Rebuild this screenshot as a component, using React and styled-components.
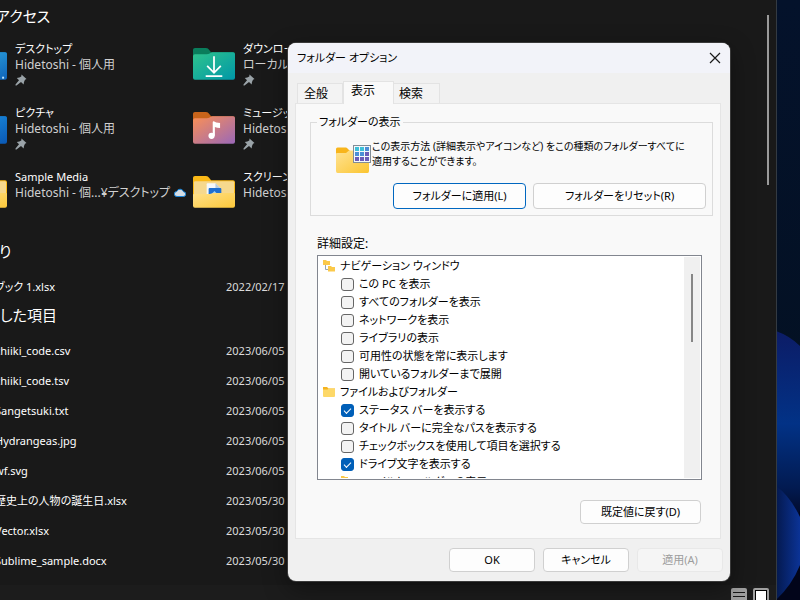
import { useState } from 'react';
import styled, { createGlobalStyle } from 'styled-components';


const places = [
    { title: 'デスクトップ', sub: 'Hidetoshi - 個人用', icon: 'desktop', pinned: true },
    { title: 'ダウンロード', sub: 'ローカルに保存済み', icon: 'download', pinned: true },
    { title: 'ピクチャ', sub: 'Hidetoshi - 個人用', icon: 'picture', pinned: true },
    { title: 'ミュージック', sub: 'Hidetoshi - 個人用', icon: 'music', pinned: true },
    { title: 'Sample Media', sub: 'Hidetoshi - 個...¥デスクトップ', icon: 'media' },
    { title: 'スクリーンショット', sub: 'Hidetoshi - 個人用', icon: 'shots', cloud: true },
];

const favorites = [{ name: 'ブック 1.xlsx', date: '2022/02/17' }];

const recents = [
    { name: 'chiiki_code.csv', date: '2023/06/05' },
    { name: 'chiiki_code.tsv', date: '2023/06/05' },
    { name: 'Sangetsuki.txt', date: '2023/06/05' },
    { name: 'Hydrangeas.jpg', date: '2023/06/05' },
    { name: 'wf.svg', date: '2023/06/05' },
    { name: '歴史上の人物の誕生日.xlsx', date: '2023/05/30' },
    { name: 'Vector.xlsx', date: '2023/05/30' },
    { name: 'Sublime_sample.docx', date: '2023/05/30' },
];

const options = [
    { group: 'ナビゲーション ウィンドウ', tree: true },
    { label: 'この PC を表示' },
    { label: 'すべてのフォルダーを表示' },
    { label: 'ネットワークを表示' },
    { label: 'ライブラリの表示' },
    { label: '可用性の状態を常に表示します' },
    { label: '開いているフォルダーまで展開' },
    { group: 'ファイルおよびフォルダー' },
    { label: 'ステータス バーを表示する', checked: true },
    { label: 'タイトル バーに完全なパスを表示する' },
    { label: 'チェックボックスを使用して項目を選択する' },
    { label: 'ドライブ文字を表示する', checked: true },
    { group: 'ファイルとフォルダーの表示', tree: true, nested: true },
];


export default function App() {
    return (
        <Desktop>
            <GlobalStyle />
            <Wallpaper />
            <Explorer />
            <FolderOptions />
        </Desktop>
    );
}


function Explorer() {
    return (
        <ExplorerWindow>
            <Content>
                <Heading>クイック アクセス</Heading>
                <Places>
                    {places.map(p => (
                        <Place key={p.title}>
                            <PlaceIcon kind={p.icon} />
                            <PlaceText>
                                <span>{p.title}</span>
                                <Sub>{p.sub}</Sub>
                                {p.pinned && <Pin />}
                            </PlaceText>
                            {p.cloud && <CloudBadge><Cloud /></CloudBadge>}
                        </Place>
                    ))}
                </Places>
                <Heading>お気に入り</Heading>
                <FileTable files={favorites} />
                <Heading>最近使用した項目</Heading>
                <FileTable files={recents} />
            </Content>
            <PageScroll />
            <StatusBar>
                <ViewButton aria-label="詳細">
                    <svg width="16" height="16"><path d="M2 4.500h12M2 8.500h12M2 12.500h12" stroke="#181818" /></svg>
                </ViewButton>
                <ViewButton aria-label="大アイコン">
                    <svg width="16" height="16"><rect x="2.500" y="2.500" width="11" height="10" fill="#fff" stroke="#000" /></svg>
                </ViewButton>
            </StatusBar>
        </ExplorerWindow>
    );
}

function FileTable({ files }) {
    return (
        <Table>
            <tbody>
                {files.map(f => (
                    <tr key={f.name}>
                        <NameCell>{f.name}</NameCell>
                        <DateCell>{f.date}</DateCell>
                    </tr>
                ))}
            </tbody>
        </Table>
    );
}

function FolderOptions() {
    return (
        <Dialog role="dialog" aria-label="フォルダー オプション">
            <TitleBar>
                <span>フォルダー オプション</span>
                <CloseButton aria-label="閉じる">
                    <svg width="12" height="12"><path d="M1 1l10 10M11 1L1 11" stroke="#1a1a1a" strokeWidth="1.200" /></svg>
                </CloseButton>
            </TitleBar>
            <Tabs role="tablist">
                <Tab role="tab">全般</Tab>
                <Tab role="tab" $active aria-selected="true">表示</Tab>
                <Tab role="tab">検索</Tab>
            </Tabs>
            <Page>
                <Group>
                    <legend>フォルダーの表示</legend>
                    <GroupInfo>
                        <ViewsIcon />
                        <p>この表示方法 (詳細表示やアイコンなど) をこの種類のフォルダーすべてに<br />適用することができます。</p>
                    </GroupInfo>
                    <GroupButtons>
                        <Button $grow={133} $primary>フォルダーに適用(L)</Button>
                        <Button $grow={173}>フォルダーをリセット(R)</Button>
                    </GroupButtons>
                </Group>
                <ListTitle>詳細設定:</ListTitle>
                <ListBox>
                    <Options>
                        {options.map(o => <Option key={o.label || o.group} option={o} />)}
                    </Options>
                    <ScrollTrack><ScrollThumb /></ScrollTrack>
                </ListBox>
                <RestoreRow>
                    <Button $width={121}>既定値に戻す(D)</Button>
                </RestoreRow>
            </Page>
            <Actions>
                <Button $width={86}>OK</Button>
                <Button $width={86}>キャンセル</Button>
                <Button $width={86} disabled>適用(A)</Button>
            </Actions>
        </Dialog>
    );
}

function Option({ option }) {
    const [checked, setChecked] = useState(!!option.checked);

    if (option.group) {
        return (
            <GroupRow $nested={option.nested}>
                {option.tree ? <TreeIcon /> : <SmallFolder />}
                {option.group}
            </GroupRow>
        );
    }

    return (
        <OptionRow>
            <Check type="checkbox" checked={checked} onChange={e => setChecked(e.target.checked)} />
            {option.label}
        </OptionRow>
    );
}


// icons

const folderColors = {
    desktop: ['#0b6fc2', '#35b5e5', '#0f62b8'],
    picture: ['#0b6fc2', '#1f9be8', '#0a58b5'],
    download: ['#0a7d5c', '#2fc48d', '#0097a7'],
    music: ['#c8641b', '#fb9055', '#9a68b8'],
    media: ['#fbb917', '#ffe08a', '#fdc93a'],
    shots: ['#fbb917', '#ffe08a', '#fdc93a'],
};

function PlaceIcon({ kind }) {
    const [back, from, to] = folderColors[kind];
    const yellow = kind === 'media' || kind === 'shots';

    return (
        <svg width="42" height="34" viewBox="0 0 43 34">
            <defs>
                <linearGradient id={`f-${kind}`} x1="0" y1="0" x2="1" y2="1">
                    <stop offset="0" stopColor={from} />
                    <stop offset="1" stopColor={to} />
                </linearGradient>
            </defs>
            <path d="M0 2.500Q0 .5 2 .5h11q2 0 3 1.500L18.500 5H41q2 0 2 2v20H0z" fill={back} />
            {!yellow && <path d="M0 9q0-2 2-2h12q2 0 3.500-1T20 5h21q2 0 2 2V31q0 2-2 2H2q-2 0-2-2z" fill={`url(#f-${kind})`} />}
            {yellow && (
                <>
                    <rect x="1" y="6" width="41" height="18" rx="1" fill="#f6d88d" />
                    {kind === 'shots' && (
                        <g>
                            <path d="M14 9q0-1 1-1h8l5 5v10H14z" fill="#f5f8fb" />
                            <path d="M23 8l5 5h-5z" fill="#b8cadb" />
                            <rect x="16" y="13" width="13" height="8" rx="1" fill="#1f6fd0" />
                            <path d="M18 20l4-4 4 4h-8z" fill="#9cd0f7" />
                        </g>
                    )}
                    <path d="M0 20q0-1 1-1h16l4-1h21q1 0 1 1v12q0 2-2 2H2q-2 0-2-2z" fill={`url(#f-${kind})`} />
                </>
            )}
            {kind === 'download' && (
                <g stroke="#fff" strokeWidth="1.800" fill="none">
                    <path d="M21.500 9v16M14.500 19l7 7 7-7M13 29.500h17" />
                </g>
            )}
            {kind === 'music' && (
                <g fill="#fff">
                    <circle cx="19" cy="25" r="3.200" />
                    <path d="M20.200 11q0-1 1-1 2 1.500 6.500 2v5q-3 0-5.300-1v9h-2.200z" />
                </g>
            )}
            {kind === 'desktop' && <path d="M38 31h2" stroke="#bfe6fb" strokeWidth="2" />}
        </svg>
    );
}

function Pin() {
    return (
        <svg width="12" height="12" viewBox="0 0 12 12">
            <path d="M6.500.5l5 4.500-1.500.7-1 2.300-.4 2.500L6 8 1.500 11.500l-1 0 0-1L4 6.300 1.800 4l2.500-.5 2-1z" fill="#9aa3a8" />
        </svg>
    );
}

function Cloud() {
    return (
        <svg width="12" height="9" viewBox="0 0 12 9">
            <path d="M3 8.500a2.500 2.500 0 0 1-.3-5 3.600 3.600 0 0 1 6.800.2 2.400 2.400 0 0 1-.2 4.800z" fill="#d5dde4" stroke="#1683d8" />
        </svg>
    );
}

function ViewsIcon() {
    const cells = [0, 1, 2].flatMap(r => [0, 1, 2].map(c => ({ r, c })));
    const tints = ['#3ec0d8', '#4b8fd6', '#6b5cb8'];

    return (
        <svg width="36" height="30" viewBox="0 0 36 30">
            <defs>
                <linearGradient id="views" x1="0" y1="0" x2="1" y2="1">
                    <stop offset="0" stopColor="#ffe394" />
                    <stop offset="1" stopColor="#fbc531" />
                </linearGradient>
            </defs>
            <path d="M0 4q0-1.500 1.500-1.500H10q1 0 2 1.500l2 2v4H0z" fill="#f8b51c" />
            <path d="M0 9q0-1 1-1h9l3-2.500h19q1 0 1 1V26q0 2-1.500 2h-30Q0 28 0 26z" fill="url(#views)" />
            <rect x="17.500" y=".5" width="17" height="17" fill="#f4f8fb" stroke="#818d96" />
            {cells.map(({ r, c }) => (
                <rect key={`${r}${c}`} x={19 + c * 5} y={2 + r * 5} width="4" height="4" fill={tints[Math.min(2, Math.floor((r * 2 + c) / 2))]} />
            ))}
        </svg>
    );
}

function TreeIcon() {
    return (
        <svg width="12" height="12" viewBox="0 0 12 12">
            <path d="M2.500 5v4.500H6" stroke="#9aa6ae" fill="none" />
            <path d="M0 0h3l1 1h3v4H0z" fill="#fbc94a" />
            <path d="M5 6h3l1 1h3v4.500H5z" fill="#fbc94a" />
        </svg>
    );
}

function SmallFolder() {
    return (
        <svg width="12" height="12" viewBox="0 0 12 12">
            <path d="M0 1h4l1.500 1.500H12V5H0z" fill="#f5b31f" />
            <path d="M0 3.500h4.500l1-1H12V10q0 1-1 1H1q-1 0-1-1z" fill="#fdd868" />
        </svg>
    );
}

function Wallpaper() {
    return (
        <WallpaperArt viewBox="0 0 24 600" preserveAspectRatio="none">
            <defs>
                <linearGradient id="sky" x1="0" y1="0" x2="0" y2="1">
                    <stop offset="0" stopColor="#04122b" />
                    <stop offset="1" stopColor="#03101f" />
                </linearGradient>
                <linearGradient id="petal" x1="0" y1="0" x2="0" y2="1">
                    <stop offset="0" stopColor="#0c1c66" />
                    <stop offset=".5" stopColor="#023286" />
                    <stop offset=".85" stopColor="#021a50" />
                    <stop offset="1" stopColor="#020a2a" />
                </linearGradient>
                <linearGradient id="petal2" x1="0" y1="0" x2="1" y2="0">
                    <stop offset="0" stopColor="#04194e" />
                    <stop offset="1" stopColor="#0b3396" />
                </linearGradient>
            </defs>
            <rect width="24" height="600" fill="url(#sky)" />
            <path d="M0 331q14 5 24 15v170H0z" fill="url(#petal)" />
            <path d="M24 510v90H0z" fill="#02051a" />
            <path d="M0 486q14 10 24 31v48q-8 20-24 35z" fill="url(#petal2)" />
        </WallpaperArt>
    );
}


const GlobalStyle = createGlobalStyle`
    * {
        box-sizing: border-box;
    }

    body {
        margin: 0;
        overflow: hidden;
        font-family: 'Noto Sans', 'Noto Sans CJK JP', sans-serif;
        font-feature-settings: 'palt', 'kern';
        font-size: 11px;
        line-height: 16px;
    }

    button {
        font: inherit;
        font-feature-settings: inherit;
        padding: 0;
    }
`;

const Desktop = styled.div`
    position: relative;
    height: 100vh;
    overflow: hidden;
    background: #04122b;
`;

const WallpaperArt = styled.svg`
    position: absolute;
    right: 0;
    width: 24px;
    height: 100%;
`;

const ExplorerWindow = styled.div`
    position: absolute;
    top: 0;
    bottom: 0;
    left: -80px;
    right: 23px;
    display: grid;
    grid-template: 1fr 15px / 1fr 12px;
    background: #191919;
    border-right: 1px solid #333a42;
    color: #fff;
`;

const Content = styled.div`
    padding: 3px 0 0 20px;
    overflow: hidden;
`;

const Heading = styled.h2`
    margin: 0;
    height: 34px;
    font-size: 15px;
    font-weight: 400;
    line-height: 26px;
`;

const Places = styled.div`
    display: grid;
    grid-template-columns: repeat(2, 228px);
    grid-auto-rows: 64px;
    padding: 4px 0 5px 25px;
`;

const Place = styled.div`
    position: relative;
    display: flex;
    gap: 8px;

    > svg {
        margin-top: 6px;
    }
`;

const PlaceText = styled.div`
    display: flex;
    flex-direction: column;
    white-space: nowrap;

    svg {
        margin-top: 1px;
    }
`;

const Sub = styled.span`
    font-size: 12px;
    color: #d0d0d0;
`;

const CloudBadge = styled.span`
    position: absolute;
    left: -19px;
    top: 16px;
`;

const Table = styled.table`
    width: 100%;
    border-collapse: collapse;
    table-layout: fixed;

    td {
        height: 30px;
        padding: 0;
        white-space: nowrap;
    }
`;

const NameCell = styled.td`
    width: 286px;

    && {
        padding-left: 55px;
    }
`;

const DateCell = styled.td`
    color: #dcdcdc;
`;

const PageScroll = styled.div`
    width: 2px;
    height: 170px;
    margin: 15px 0 0 3px;
    background: #9a9a9a;
`;

const StatusBar = styled.div`
    grid-column: 1 / -1;
    display: flex;
    justify-content: flex-end;
    gap: 6px;
    padding: 3px 7px 0 0;
    background: #1c1c1c;
`;

const ViewButton = styled.button`
    flex: none;
    width: 16px;
    height: 16px;
    border: 0;
    border-radius: 2px;
    background: #a0a0a0;
`;

const Dialog = styled.section`
    position: absolute;
    top: 43px;
    left: 36%;
    right: 70px;
    border-radius: 8px;
    background: #f0f0f0;
    color: #000;
    box-shadow: 0 0 0 1px #3a3a3a, 0 8px 24px rgba(0, 0, 0, 0.4);
    overflow: hidden;
`;

const TitleBar = styled.header`
    display: flex;
    justify-content: space-between;
    align-items: center;
    height: 30px;
    padding: 0 9px;
    background: #f2f3f9;
`;

const CloseButton = styled.button`
    display: grid;
    border: 0;
    background: none;
`;

const Tabs = styled.div`
    display: flex;
    align-items: flex-end;
    height: 30px;
    padding: 0 9px;
    font-size: 12px;
`;

const Tab = styled.button`
    z-index: 1;
    width: ${p => p.$active ? '51px' : '46px'};
    height: ${p => p.$active ? '23px' : '20px'};
    margin-bottom: ${p => p.$active ? '-1px' : '0'};
    padding: ${p => p.$active ? '0 7px 4px' : '0 6px'};
    border: 1px solid #e3e3e3;
    border-bottom: 0;
    background: ${p => p.$active ? '#f9f9f9' : '#f3f3f3'};
    text-align: left;

    &:last-child {
        border-left: 0;
        padding-left: 5px;
    }
`;

const Page = styled.div`
    margin: 0 9px 0 7px;
    padding: 10px 7px 14px 14px;
    border: 1px solid #e5e5e5;
    background: #f9f9f9;
`;

const Group = styled.fieldset`
    margin: 0;
    min-width: 0;
    padding: 9px 6px 6px 25px;
    border: 1px solid #dcdcdc;

    legend {
        margin-left: -19px;
        padding: 0 2px;
    }
`;

const GroupInfo = styled.div`
    display: flex;

    svg {
        flex: none;
        margin-top: 6px;
    }

    p {
        margin: 0;
        font-size: 10px;
        line-height: 15px;
        white-space: nowrap;
    }
`;

const GroupButtons = styled.div`
    display: flex;
    gap: 7px;
    margin-top: 8px;
    padding-left: 57px;
`;

const Button = styled.button`
    height: ${p => p.$grow ? '26px' : '24px'};
    ${p => p.$grow ? `flex: ${p.$grow} 1 0;` : `width: ${p.$width}px;`}
    border: 1px solid ${p => p.$primary ? '#0067c0' : '#d0d0d0'};
    border-radius: 4px;
    background: #fdfdfd;
    color: #000;

    &:disabled {
        border-color: #e8e8e8;
        background: #f5f5f5;
        color: #9d9d9d;
    }
`;

const ListTitle = styled.div`
    margin: 20px 0 3px 7px;
    font-size: 12px;
`;

const ListBox = styled.div`
    display: flex;
    height: 225px;
    margin: 0 11px 0 7px;
    padding: 1px;
    border: 1px solid #82868f;
    background: #fff;
`;

const Options = styled.div`
    flex: 1;
    overflow: hidden;
`;

const GroupRow = styled.div`
    display: flex;
    align-items: center;
    gap: 5px;
    height: 18px;
    padding-left: ${p => p.$nested ? '22px' : '4px'};
`;

const OptionRow = styled.label`
    display: flex;
    align-items: center;
    gap: 5px;
    height: 18px;
    padding-left: 22px;
`;

const Check = styled.input`
    appearance: none;
    flex: none;
    width: 13px;
    height: 13px;
    margin: 0;
    border: 1px solid #666;
    border-radius: 3px;
    background: #f3f3f3;

    &:checked {
        display: grid;
        place-items: center;
        border-color: #005fb8;
        background: #005fb8;
    }

    &:checked::after {
        content: '';
        width: 6px;
        height: 3px;
        border: solid #fff;
        border-width: 0 0 1px 1px;
        transform: rotate(-45deg);
    }
`;

const ScrollTrack = styled.div`
    width: 16px;
    padding-top: 17px;
    background: #f0f0f0;
`;

const ScrollThumb = styled.div`
    width: 2px;
    height: 68px;
    margin-left: 7px;
    background: #868686;
`;

const RestoreRow = styled.div`
    display: flex;
    justify-content: flex-end;
    margin: 20px 12px 0 0;
`;

const Actions = styled.footer`
    display: flex;
    justify-content: flex-end;
    gap: 8px;
    padding: 9px 7px 9px;
`;
